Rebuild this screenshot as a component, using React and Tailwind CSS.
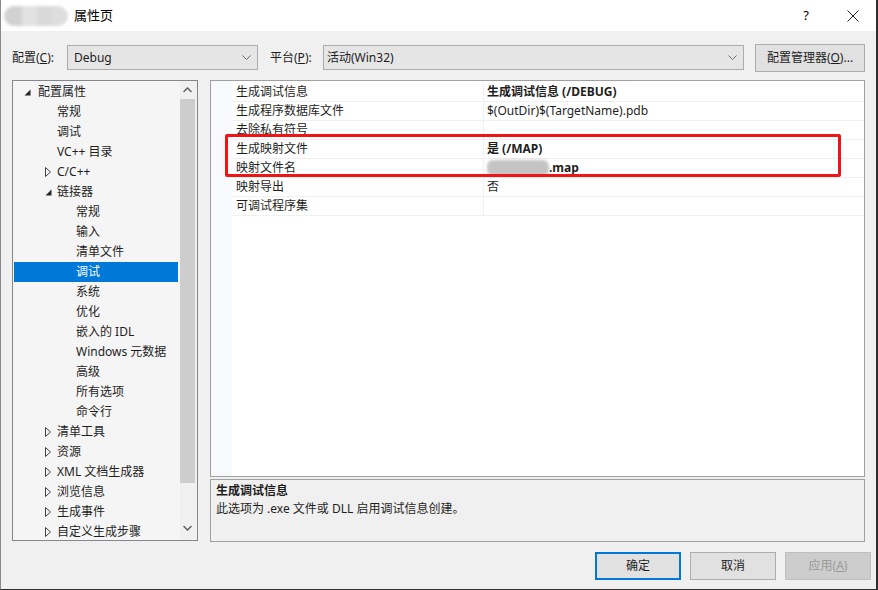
import React from 'react';

// Cây thuộc tính bên trái
const treeItems = [
  { label: '配置属性', level: 0, arrow: 'open' },
  { label: '常规', level: 1 },
  { label: '调试', level: 1 },
  { label: 'VC++ 目录', level: 1 },
  { label: 'C/C++', level: 1, arrow: 'closed' },
  { label: '链接器', level: 1, arrow: 'open' },
  { label: '常规', level: 2 },
  { label: '输入', level: 2 },
  { label: '清单文件', level: 2 },
  { label: '调试', level: 2, selected: true },
  { label: '系统', level: 2 },
  { label: '优化', level: 2 },
  { label: '嵌入的 IDL', level: 2 },
  { label: 'Windows 元数据', level: 2 },
  { label: '高级', level: 2 },
  { label: '所有选项', level: 2 },
  { label: '命令行', level: 2 },
  { label: '清单工具', level: 1, arrow: 'closed' },
  { label: '资源', level: 1, arrow: 'closed' },
  { label: 'XML 文档生成器', level: 1, arrow: 'closed' },
  { label: '浏览信息', level: 1, arrow: 'closed' },
  { label: '生成事件', level: 1, arrow: 'closed' },
  { label: '自定义生成步骤', level: 1, arrow: 'closed' },
];

const gridRows = [
  { name: '生成调试信息', value: '生成调试信息 (/DEBUG)', bold: true },
  { name: '生成程序数据库文件', value: '$(OutDir)$(TargetName).pdb' },
  { name: '去除私有符号', value: '' },
  { name: '生成映射文件', value: '是 (/MAP)', bold: true },
  { name: '映射文件名', value: '.map', bold: true, blurred: true },
  { name: '映射导出', value: '否' },
  { name: '可调试程序集', value: '' },
];

const textLeft = { 0: 'pl-[24px]', 1: 'pl-[43px]', 2: 'pl-[62px]' };
const arrowLeft = { 0: 'w-[10px] ml-[8px] mr-[6px]', 1: 'w-[10px] ml-[29px] mr-[4px]' };

const Chevron = () => (
  <svg width="9" height="6" viewBox="0 0 9 6" className="shrink-0">
    <path d="M0.5 0.5 L4.5 4.5 L8.5 0.5" fill="none" stroke="#6a6a6a" strokeWidth="1" />
  </svg>
);

const TreeArrow = ({ type, selected }) =>
  type === 'open' ? (
    <svg width="7" height="7" viewBox="0 0 7 7">
      <path d="M6.5 0.5 L6.5 6.5 L0.5 6.5 Z" fill={selected ? '#fff' : '#262626'} />
    </svg>
  ) : (
    <svg width="6" height="10" viewBox="0 0 6 10">
      <path d="M0.5 0.5 L5.5 5 L0.5 9.5 Z" fill="none" stroke="#404040" strokeWidth="1" />
    </svg>
  );

const TreeRow = ({ item }) => (
  <div
    className={`h-[20px] flex items-center whitespace-nowrap ${item.selected ? 'bg-[#0078d7] text-white' : 'text-[#1e1e1e]'}`}
  >
    {item.arrow ? (
      <>
        <span className={`flex justify-center items-center ${arrowLeft[item.level]}`}>
          <TreeArrow type={item.arrow} selected={item.selected} />
        </span>
        <span>{item.label}</span>
      </>
    ) : (
      <span className={textLeft[item.level]}>{item.label}</span>
    )}
  </div>
);

const App = () => {
  return (
    <div
      className="w-[878px] h-[590px] bg-[#f0f0f0] relative overflow-hidden border-l border-l-[#8a8a8a] border-r-2 border-r-[#2e2e2e] border-b border-b-[#2e2e2e] text-[12px] text-[#1e1e1e]"
      style={{ fontFamily: '"Segoe UI", "Noto Sans", "Noto Sans CJK SC", sans-serif' }}
    >
      {/* Thanh tiêu đề */}
      <div className="h-[31px] bg-white flex items-center">
        <div className="ml-[3px] w-[64px] h-[21px] flex items-center blur-[1.5px]">
          <div className="w-[18px] h-[20px] rounded-l-full bg-[#d2d2d2]" />
          <div className="w-[15px] h-[20px] bg-[#e2e2e2]" />
          <div className="w-[15px] h-[20px] bg-[#d9d9d9]" />
          <div className="w-[16px] h-[20px] rounded-r-full bg-[#dedede]" />
        </div>
        <span className="ml-[6px] text-[13px] text-black">属性页</span>
        <span className="ml-auto text-[13px] text-black mr-[38px]">?</span>
        <svg width="12" height="12" viewBox="0 0 12 12" className="mr-[17px]">
          <path d="M0.5 0.5 L11.5 11.5 M11.5 0.5 L0.5 11.5" stroke="#1a1a1a" strokeWidth="1" />
        </svg>
      </div>

      {/* Hàng cấu hình */}
      <div className="mt-[14px] h-[25px] flex items-center pl-[11px]">
        <span className="w-[55px]">
          配置(<span className="underline">C</span>):
        </span>
        <div className="w-[191px] h-[25px] bg-[#e5e5e5] border border-[#acacac] flex items-center pl-[6px] pr-[6px] justify-between">
          <span>Debug</span>
          <Chevron />
        </div>
        <span className="ml-[12px] w-[53px]">
          平台(<span className="underline">P</span>):
        </span>
        <div className="w-[421px] h-[25px] bg-[#e5e5e5] border border-[#acacac] flex items-center pl-[3px] pr-[6px] justify-between">
          <span>活动(Win32)</span>
          <Chevron />
        </div>
        <div className="ml-[11px] w-[110px] h-[28px] bg-[#e1e1e1] border border-[#adadad] flex items-center justify-center">
          配置管理器(<span className="underline">O</span>)...
        </div>
      </div>

      {/* Nội dung chính */}
      <div className="mt-[10px] flex pl-[11px]">
        {/* Cây bên trái */}
        <div className="w-[186px] h-[461px] border border-[#828790] bg-[#f5f5f5] flex overflow-hidden">
          <div className="flex-1 pt-[1px] pl-[1px] pr-[2px] overflow-hidden">
            {treeItems.map((item, index) => (
              <TreeRow key={index} item={item} />
            ))}
          </div>
          <div className="w-[17px] bg-[#f0f0f0] flex flex-col items-start">
            <div className="w-[15px] h-[18px] flex items-center justify-center">
              <svg width="9" height="6" viewBox="0 0 9 6">
                <path d="M0.5 5 L4.5 1 L8.5 5" fill="none" stroke="#606060" strokeWidth="1.5" />
              </svg>
            </div>
            <div className="w-[15px] h-[384px] bg-[#cdcdcd]" />
            <div className="flex-1" />
            <div className="w-[15px] h-[18px] flex items-center justify-center mb-[3px]">
              <svg width="9" height="6" viewBox="0 0 9 6">
                <path d="M0.5 1 L4.5 5 L8.5 1" fill="none" stroke="#606060" strokeWidth="1.5" />
              </svg>
            </div>
          </div>
        </div>

        {/* Lưới thuộc tính + mô tả */}
        <div className="ml-[12px] w-[655px] flex flex-col">
          <div className="h-[397px] border border-[#a0a0a0] bg-white flex">
            <div className="w-[21px] bg-[#f7f9fc]" />
            <div className="flex-1 pt-[2px]">
              {gridRows.map((row, index) => (
                <div key={index} className="h-[19px] flex border-b border-[#f0f0f0]">
                  <div className="w-[252px] pl-[4px] border-r border-[#f0f0f0] flex items-center">{row.name}</div>
                  <div className={`flex-1 pl-[3px] flex items-center ${row.bold ? 'font-bold' : ''}`}>
                    {row.blurred && <span className="w-[62px] h-[16px] bg-[#c4c4c4] rounded-[6px] blur-[1.5px] mr-[0px]" />}
                    {row.value}
                  </div>
                </div>
              ))}
            </div>
          </div>
          <div className="mt-[2px] h-[63px] border border-[#a0a0a0] bg-[#f0f0f0] pl-[5px] pt-[2px] leading-[18px]">
            <div className="font-bold">生成调试信息</div>
            <div>此选项为 .exe 文件或 DLL 启用调试信息创建。</div>
          </div>
        </div>
      </div>

      {/* Nút bấm */}
      <div className="mt-[10px] flex pl-[594px] gap-[9px]">
        <div className="w-[86px] h-[28px] bg-[#e1e1e1] border-2 border-[#0078d7] flex items-center justify-center">确定</div>
        <div className="w-[86px] h-[28px] bg-[#e1e1e1] border border-[#adadad] flex items-center justify-center">取消</div>
        <div className="w-[86px] h-[28px] bg-[#cccccc] border border-[#bfbfbf] text-[#9a9a9a] flex items-center justify-center">
          应用(<span className="underline">A</span>)
        </div>
      </div>

      {/* Khung đỏ đánh dấu */}
      <div className="absolute left-[224px] top-[134px] w-[616px] h-[43px] border-[3px] border-[#f01414] rounded-[2px] pointer-events-none" />
    </div>
  );
};

export default App;
